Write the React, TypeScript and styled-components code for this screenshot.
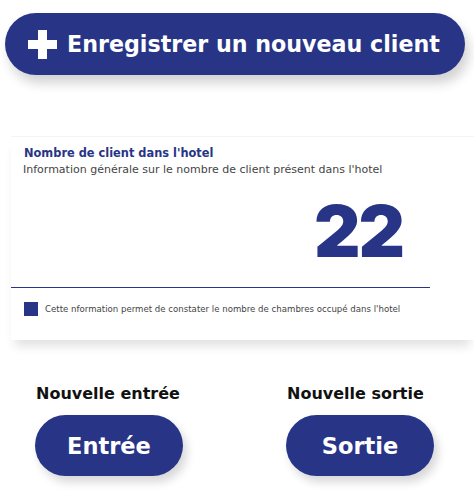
import React from 'react';
import styled, { createGlobalStyle } from 'styled-components';

const navy = '#283587';
const font = `"DejaVu Sans","Noto Sans",sans-serif`;

const Global = createGlobalStyle`
body{
    margin:0;
    background:#fff;
    font-family:${font};
}
`;
const Page = styled.div`
width:474px;
height:497px;
overflow:hidden;
padding-top:13px;
box-sizing:border-box;
`;
const BigButton = styled.button`
display:flex;
align-items:center;
gap:10px;
margin-left:5px;
width:460px;
height:62px;
padding:0 0 0 23px;
box-sizing:border-box;
border:none;
border-radius:31px;
background:${navy};
color:#fff;
font-family:${font};
font-weight:700;
font-size:22.2px;
box-shadow:4px 8px 12px rgba(0,0,0,0.18);
`;
const Card = styled.section`
margin:61px 0 0 11px;
height:203px;
border-top:1px solid #f4f4f4;
background:#fff;
box-shadow:0 10px 10px -4px rgba(0,0,0,0.12);
display:flex;
flex-direction:column;
`;
const Title = styled.h3`
margin:8px 0 0 13px;
font-size:11.4px;
line-height:16px;
font-weight:600;
color:${navy};
`;
const Subtitle = styled.p`
margin:2px 0 0 12px;
font-size:11px;
line-height:14px;
color:#444;
`;
const Count = styled.div`
margin:14px 0 0 303px;
font-family:Inter,sans-serif;
font-size:72px;
line-height:80px;
font-weight:900;
letter-spacing:-2px;
color:${navy};
`;
const Rule = styled.hr`
margin:16px 0 0 0;
width:419px;
border:none;
border-top:1.5px solid ${navy};
`;
const Legend = styled.div`
display:flex;
align-items:center;
gap:7px;
margin:14px 0 0 13px;
font-size:8.6px;
color:#444;
`;
const Swatch = styled.span`
flex:none;
width:14px;
height:14px;
background:${navy};
`;
const Actions = styled.div`
display:grid;
grid-template-columns:251px 188px;
margin:43px 0 0 35px;
`;
const Action = styled.div`
display:flex;
flex-direction:column;
`;
const Label = styled.div`
font-size:16px;
line-height:22px;
font-weight:700;
color:#111;
padding-left:1px;
`;
const SmallButton = styled.button`
margin-top:10px;
width:148px;
height:61px;
border:none;
border-radius:31px;
background:${navy};
color:#fff;
font-family:${font};
font-weight:700;
font-size:22.5px;
box-shadow:4px 6px 10px rgba(0,0,0,0.16);
`;

function Plus() {
    return <svg width="29" height="29" viewBox="0 0 29 29">
        <path d="M10 0h9v10h10v9H19v10h-9V19H0v-9h10z" fill="#fff"/>
    </svg>;
}

export default function App() {
    return (
        <Page>
            <Global/>
            <BigButton><Plus/>Enregistrer un nouveau client</BigButton>
            <Card>
                <Title>Nombre de client dans l'hotel</Title>
                <Subtitle>Information générale sur le nombre de client présent dans l'hotel</Subtitle>
                <Count>22</Count>
                <Rule/>
                <Legend>
                    <Swatch/>
                    Cette nformation permet de constater le nombre de chambres occupé dans l'hotel
                </Legend>
            </Card>
            <Actions>
                <Action>
                    <Label>Nouvelle entrée</Label>
                    <SmallButton>Entrée</SmallButton>
                </Action>
                <Action>
                    <Label>Nouvelle sortie</Label>
                    <SmallButton>Sortie</SmallButton>
                </Action>
            </Actions>
        </Page>
    );
}
